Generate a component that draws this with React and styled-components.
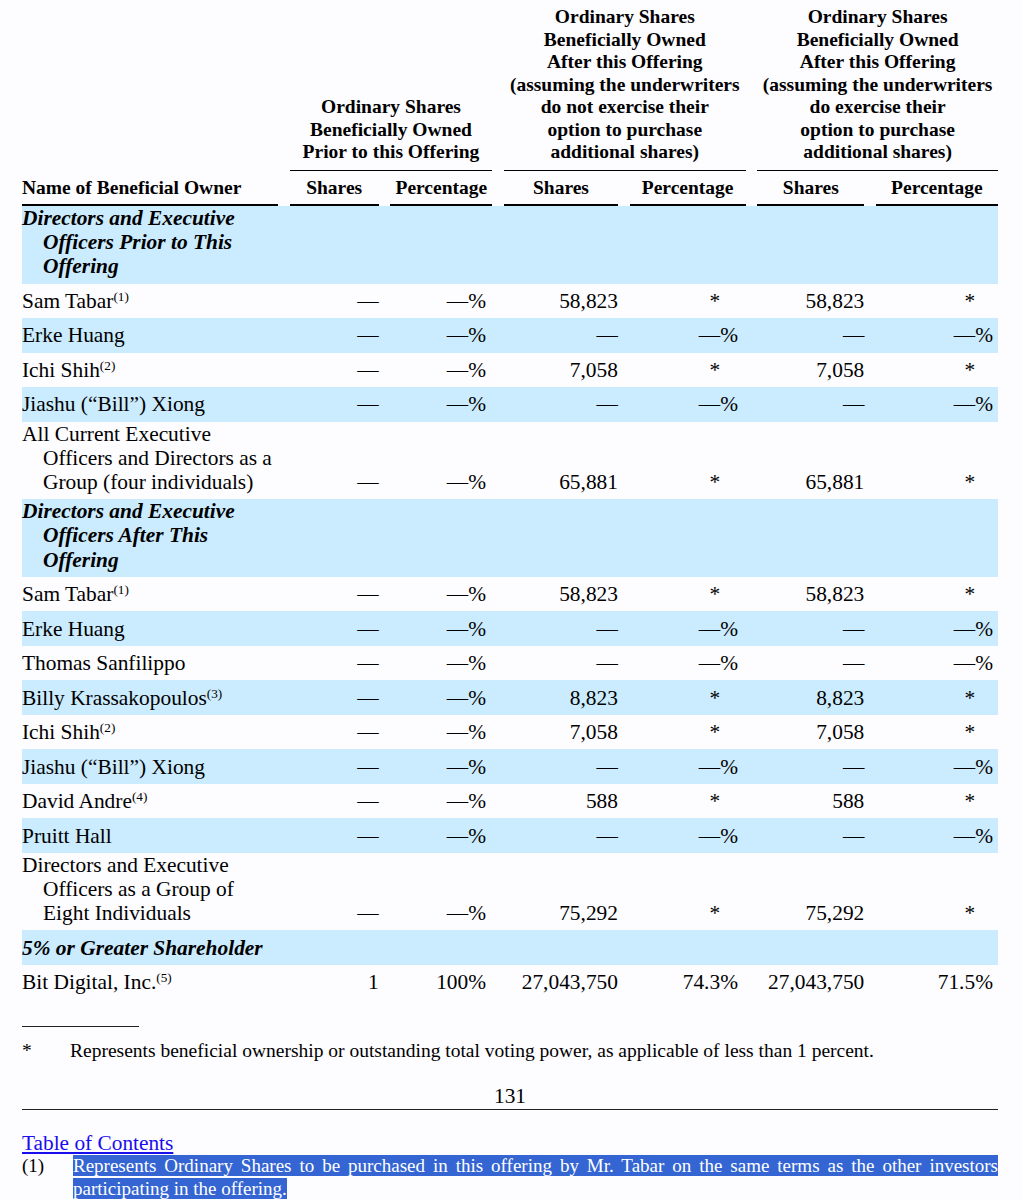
import React from "react";
import styled, { createGlobalStyle } from "styled-components";

const GlobalStyle = createGlobalStyle`
  html, body { margin: 0; padding: 0; background: #fdfcff; }
  body { font-family: "Liberation Serif", "Times New Roman", serif; color: #000; }
`;

const COLS = "256px 89px 102px 114px 116px 107px 122px";
const GAP = "11.67px";

const Page = styled.div`
  width: 976px;
  padding: 6px 0 0 22px;
`;

const HeaderGrid = styled.div`
  display: grid;
  grid-template-columns: ${COLS};
  column-gap: ${GAP};
  font-size: 19.5px;
  line-height: 22.5px;
  font-weight: bold;
`;

const GroupHead = styled.div`
  grid-column: span 2;
  align-self: end;
  text-align: center;
  padding-bottom: 6px;
  border-bottom: 1.6px solid #000;
`;

const SubHead = styled.div`
  align-self: end;
  text-align: ${(p) => (p.$left ? "left" : "center")};
  padding: 6px 0 5px;
  border-bottom: 2px solid #000;
`;

const Row = styled.div`
  display: grid;
  grid-template-columns: ${COLS};
  column-gap: ${GAP};
  align-items: end;
  min-height: 34.5px;
  box-sizing: border-box;
  background: ${(p) => (p.$blue ? "#cbebfe" : "transparent")};
  font-size: 21.4px;
  line-height: 24.2px;
`;

const NameCell = styled.div`
  padding: 0 0 5px 21px;
  text-indent: -21px;
  font-weight: ${(p) => (p.$section ? "bold" : "normal")};
  font-style: ${(p) => (p.$section ? "italic" : "normal")};
`;

const NumCell = styled.div`
  padding-bottom: 5px;
  text-align: right;
  white-space: nowrap;
`;

const PctCell = styled.div`
  padding: 0 ${(p) => p.$pr}px 5px 0;
  display: flex;
  justify-content: flex-end;
  white-space: nowrap;
`;

const PctSign = styled.span`
  display: inline-block;
  width: 17.8px;
  text-align: left;
`;

const Sup = styled.sup`
  font-size: 0.62em;
  line-height: 0;
  vertical-align: 0.55em;
`;

const ShortRule = styled.div`
  width: 117px;
  height: 1px;
  background: #222;
  margin-top: 27px;
`;

const NoteRow = styled.div`
  display: flex;
  margin-top: 13px;
  font-size: 19.5px;
  line-height: 22px;
`;

const NoteMark = styled.span`
  width: 48px;
  flex: none;
`;

const PageNum = styled.div`
  text-align: center;
  font-size: 21.33px;
  line-height: 23px;
  margin-top: 23px;
`;

const FullRule = styled.div`
  height: 1px;
  background: #222;
  margin-top: 1px;
`;

const TocLink = styled.a`
  display: inline-block;
  margin-top: 22px;
  color: #1a0dee;
  text-decoration: underline;
  font-size: 21.33px;
  line-height: 23px;
`;

const FootRow = styled.div`
  display: flex;
  font-size: 19px;
  line-height: 22.5px;
`;

const FootMark = styled.span`
  width: 51px;
  flex: none;
`;

const FootText = styled.div`
  flex: 1;
  text-align: justify;
`;

const Selected = styled.span`
  background: #3465d2;
  color: #fff;
`;

const D = "\u2014";

const sections = [
  {
    title: "Directors and Executive Officers Prior to This Offering",
    rows: [
      { name: "Sam Tabar", sup: "(1)", v: [D, D + "%", "58,823", "*", "58,823", "*"] },
      { name: "Erke Huang", v: [D, D + "%", D, D + "%", D, D + "%"] },
      { name: "Ichi Shih", sup: "(2)", v: [D, D + "%", "7,058", "*", "7,058", "*"] },
      { name: "Jiashu (\u201cBill\u201d) Xiong", v: [D, D + "%", D, D + "%", D, D + "%"] },
      {
        name: "All Current Executive Officers and Directors as a Group (four individuals)",
        v: [D, D + "%", "65,881", "*", "65,881", "*"],
      },
    ],
  },
  {
    title: "Directors and Executive Officers After This Offering",
    rows: [
      { name: "Sam Tabar", sup: "(1)", v: [D, D + "%", "58,823", "*", "58,823", "*"] },
      { name: "Erke Huang", v: [D, D + "%", D, D + "%", D, D + "%"] },
      { name: "Thomas Sanfilippo", v: [D, D + "%", D, D + "%", D, D + "%"] },
      { name: "Billy Krassakopoulos", sup: "(3)", v: [D, D + "%", "8,823", "*", "8,823", "*"] },
      { name: "Ichi Shih", sup: "(2)", v: [D, D + "%", "7,058", "*", "7,058", "*"] },
      { name: "Jiashu (\u201cBill\u201d) Xiong", v: [D, D + "%", D, D + "%", D, D + "%"] },
      { name: "David Andre", sup: "(4)", v: [D, D + "%", "588", "*", "588", "*"] },
      { name: "Pruitt Hall", v: [D, D + "%", D, D + "%", D, D + "%"] },
      {
        name: "Directors and Executive Officers as a Group of Eight Individuals",
        v: [D, D + "%", "75,292", "*", "75,292", "*"],
      },
    ],
  },
  {
    title: "5% or Greater Shareholder",
    rows: [
      { name: "Bit Digital, Inc.", sup: "(5)", v: ["1", "100%", "27,043,750", "74.3%", "27,043,750", "71.5%"] },
    ],
  },
];

const PCT_PAD = [6.3, 7.7, 5];

function Pct({ value, pr }) {
  const hasPct = value.endsWith("%");
  const base = hasPct ? value.slice(0, -1) : value;
  return (
    <PctCell $pr={pr}>
      <span>{base}</span>
      <PctSign>{hasPct ? "%" : ""}</PctSign>
    </PctCell>
  );
}

function DataRow({ row, blue }) {
  const v = row.v;
  return (
    <Row $blue={blue}>
      <NameCell>
        {row.name}
        {row.sup && <Sup>{row.sup}</Sup>}
      </NameCell>
      <NumCell>{v[0]}</NumCell>
      <Pct value={v[1]} pr={PCT_PAD[0]} />
      <NumCell>{v[2]}</NumCell>
      <Pct value={v[3]} pr={PCT_PAD[1]} />
      <NumCell>{v[4]}</NumCell>
      <Pct value={v[5]} pr={PCT_PAD[2]} />
    </Row>
  );
}

export default function App() {
  return (
    <Page>
      <GlobalStyle />
      <HeaderGrid>
        <div />
        <GroupHead>
          Ordinary Shares
          <br />
          Beneficially Owned
          <br />
          Prior to this Offering
        </GroupHead>
        <GroupHead>
          Ordinary Shares
          <br />
          Beneficially Owned
          <br />
          After this Offering
          <br />
          (assuming the underwriters
          <br />
          do not exercise their
          <br />
          option to purchase
          <br />
          additional shares)
        </GroupHead>
        <GroupHead>
          Ordinary Shares
          <br />
          Beneficially Owned
          <br />
          After this Offering
          <br />
          (assuming the underwriters
          <br />
          do exercise their
          <br />
          option to purchase
          <br />
          additional shares)
        </GroupHead>
        <SubHead $left>Name of Beneficial Owner</SubHead>
        <SubHead>Shares</SubHead>
        <SubHead>Percentage</SubHead>
        <SubHead>Shares</SubHead>
        <SubHead>Percentage</SubHead>
        <SubHead>Shares</SubHead>
        <SubHead>Percentage</SubHead>
      </HeaderGrid>

      {sections.map((s) => (
        <React.Fragment key={s.title}>
          <Row $blue>
            <NameCell $section>{s.title}</NameCell>
          </Row>
          {s.rows.map((r, i) => (
            <DataRow key={r.name + i} row={r} blue={i % 2 === 1} />
          ))}
        </React.Fragment>
      ))}

      <ShortRule />
      <NoteRow>
        <NoteMark>*</NoteMark>
        <span>
          Represents beneficial ownership or outstanding total voting power, as applicable of less than 1
          percent.
        </span>
      </NoteRow>
      <PageNum>131</PageNum>
      <FullRule />
      <TocLink href="#">Table of Contents</TocLink>
      <FootRow>
        <FootMark>(1)</FootMark>
        <FootText>
          <Selected>
            Represents Ordinary Shares to be purchased in this offering by Mr. Tabar on the same terms as the
            other investors participating in the offering.
          </Selected>
        </FootText>
      </FootRow>
    </Page>
  );
}
